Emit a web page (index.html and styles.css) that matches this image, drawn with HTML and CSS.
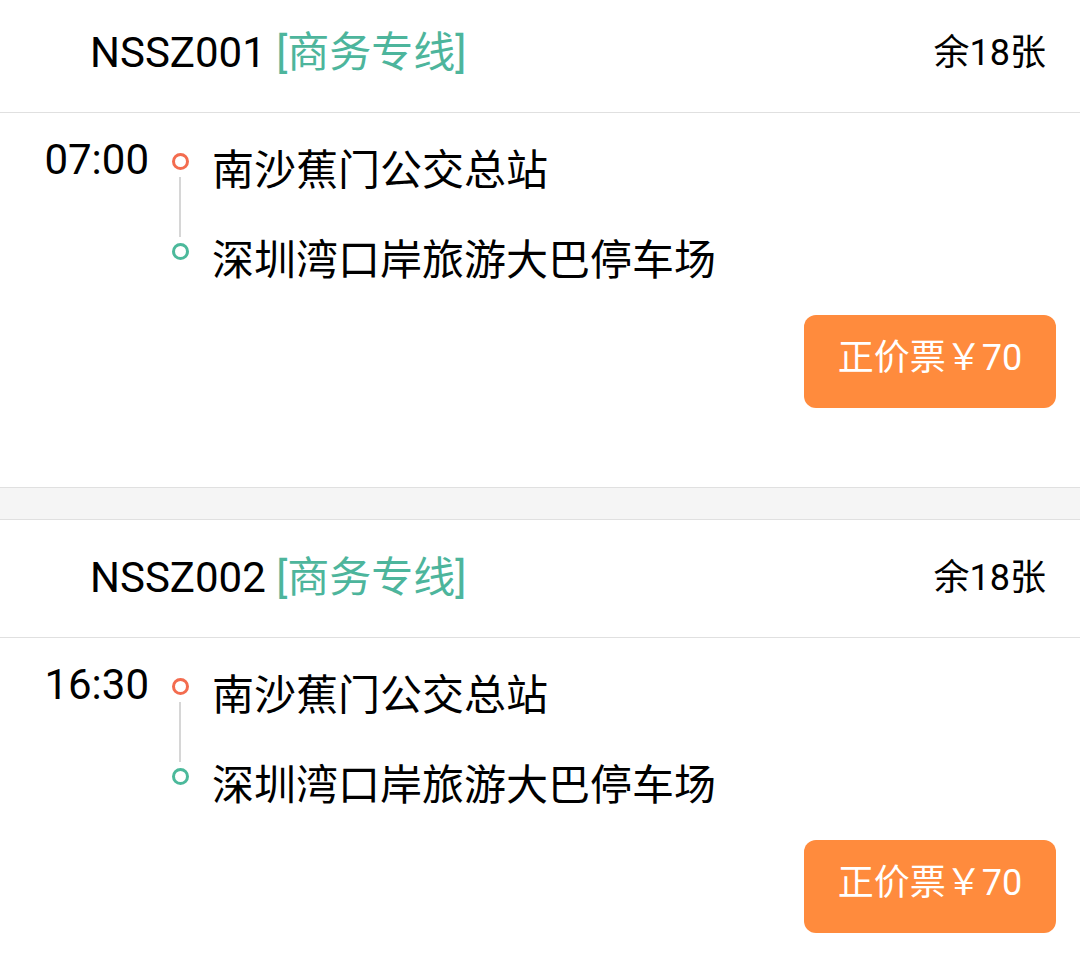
FILE: index.html
```html
<!DOCTYPE html>
<html lang="zh-CN">
<head>
<meta charset="utf-8" />
<title>班次列表</title>
<link rel="stylesheet" href="styles.css">
</head>
<body>
<div class="list">
  <div class="card">
    <div class="head">
      <div class="title">NSSZ001 <span class="tag">[商务专线]</span></div>
      <div class="left">余18张</div>
    </div>
    <div class="body">
      <div class="route">
        <div class="time">07:00</div>
        <div class="marks">
          <span class="dot start"></span>
          <span class="line"></span>
          <span class="dot end"></span>
        </div>
        <div class="stops">
          <div class="stop">南沙蕉门公交总站</div>
          <div class="stop">深圳湾口岸旅游大巴停车场</div>
        </div>
      </div>
      <div class="act"><a class="btn" href="#">正价票￥70</a></div>
    </div>
  </div>
  <div class="card">
    <div class="head">
      <div class="title">NSSZ002 <span class="tag">[商务专线]</span></div>
      <div class="left">余18张</div>
    </div>
    <div class="body">
      <div class="route">
        <div class="time">16:30</div>
        <div class="marks">
          <span class="dot start"></span>
          <span class="line"></span>
          <span class="dot end"></span>
        </div>
        <div class="stops">
          <div class="stop">南沙蕉门公交总站</div>
          <div class="stop">深圳湾口岸旅游大巴停车场</div>
        </div>
      </div>
      <div class="act"><a class="btn" href="#">正价票￥70</a></div>
    </div>
  </div>
</div>
</body>
</html>
```

FILE: styles.css
```css
*{box-sizing:border-box;}
body{margin:0;background:#f5f5f5;color:#111;font-family:Roboto,"Noto Sans CJK SC",sans-serif;overflow:hidden;}
a{text-decoration:none;}
.list {margin-top:-6px;}
.card {background:#fff;border-top:1px solid #e0e0e0;border-bottom:1px solid #e0e0e0;}
.card + .card {margin-top:31px;}
.head {height:118px;border-bottom:1px solid #e0e0e0;display:flex;align-items:center;justify-content:space-between;padding:0 34px 10px 90px;}
.title {font-size:42px;color:#000;}
.tag {color:#4db59c;}
.left {font-size:36px;color:#000;}
.body {height:374px;padding:27px 24px 0 0;}
.route {display:flex;align-items:flex-start;}
.time {width:149px;text-align:right;font-size:42px;line-height:40px;color:#000;}
.marks {width:62px;margin-top:13px;display:flex;flex-direction:column;align-items:center;}
.dot {width:17px;height:17px;border-radius:50%;border:3px solid #f36c4f;}
.dot.end {border-color:#4cb99b;}
.line {width:2px;height:60px;margin:7px 0 6px;background:#d6d6d6;}
.stops {margin-top:10px;margin-left:1px;display:flex;flex-direction:column;gap:48px;}
.stop {font-size:42px;line-height:42px;color:#000;}
.act {display:flex;justify-content:flex-end;margin-top:33px;}
.btn {width:252px;height:93px;border-radius:12px;background:#ff8b3d;color:#fff;font-size:36px;line-height:1;padding-bottom:8px;display:flex;align-items:center;justify-content:center;}
```
